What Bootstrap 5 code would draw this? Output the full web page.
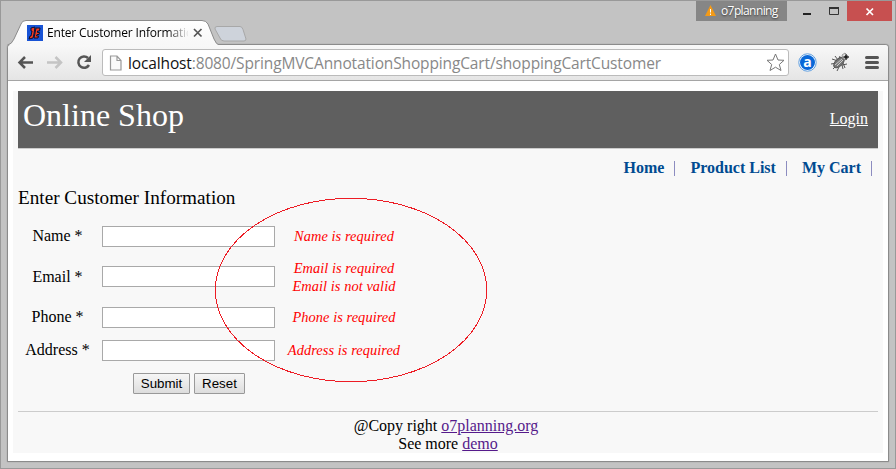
<!DOCTYPE html>
<html lang="en">
<head>
<meta charset="utf-8">
<title>Enter Customer Information</title>
<link href="https://cdn.jsdelivr.net/npm/bootstrap@5.3.0/dist/css/bootstrap.min.css" rel="stylesheet">
<style>
body{width:896px;height:469px;overflow:hidden;background:#c3c3c3;border:1px solid #999;font-family:"Liberation Serif",serif;font-size:16px;line-height:18px;color:#000}
svg{display:block;flex:none}
.titlebar{height:43px;font-family:"Open Sans",sans-serif}
.tabstrip{width:250px;height:44px}
.tab-bg{position:absolute;left:0;top:0;z-index:1}
.tab-content{position:relative;z-index:2;padding:20px 0 0 26px;height:43px}
.tab-title{width:141px;margin-left:4px;font-size:12px;letter-spacing:-.17px;white-space:nowrap;-webkit-mask-image:linear-gradient(90deg,#000 85%,transparent 101%);mask-image:linear-gradient(90deg,#000 85%,transparent 101%)}
.window-controls{padding-right:3px}
.user-tag{width:91px;height:20px;background:#868686;color:#fff;font-size:12px;letter-spacing:-.6px;padding-left:8px;text-shadow:0 1px 2px #333}
.win-btn{height:20px}
.browser{margin:0 6px;height:418px;border:1px solid #8b8b8b;border-radius:4px 4px 0 0;background:#fff;box-shadow:0 0 1px #777}
.toolbar{height:36px;border-bottom:1px solid #a5a5a5;border-radius:3px 3px 0 0;background:linear-gradient(#f8f8f8,#e5e5e5)}
.address{width:687px;height:27px;border:1px solid #bbb;border-radius:3px;background:#fff;font-family:"Open Sans",sans-serif;font-size:15.5px;letter-spacing:-.135px;color:#888}
.address b{font-weight:400;color:#111}
.page{margin:10px 5px 0;padding:0 5px;width:870px;height:362px;background:#f8f8f8}
.shop-header{height:58px;background:#5f5f5f;border-bottom:1px solid #ccc;color:#fff;padding:0 10px 0 5px}
.shop-name{font-size:32px;line-height:48px}
.shop-header a{color:#fff;margin-top:19px}
.menu{height:38px;padding-right:6px}
.menu a{color:#004b91;font-weight:700;text-decoration:none}
.menu i{width:1px;height:15px;background:#8c8cc0;margin:1px 0 0 10px}
.menu i+a{margin-left:15px}
.page-title{font-size:19.2px;line-height:22px}
.customer-form{padding-top:11px}
.form-line{height:33px}
.form-line.tall{height:48px}
.form-line.tall .field{margin-bottom:1px}
.label-cell{width:79px;text-align:center}
.field{width:173px;height:21px;border:1px solid #a9a9a9;background:#fff;margin-left:5px;padding:0 2px}
.error{width:138px;text-align:center;color:#f00;font-style:italic;font-size:14.4px;letter-spacing:.06px}
.lift{position:relative;top:-1px}
.push{height:21px;padding:0;border:1px solid #999;border-radius:1px;background:linear-gradient(#f6f6f6,#ddd);font:13.33px/18px "Liberation Sans",sans-serif;color:#000}
.buttons{padding-left:115px}
.submit{width:57px}
.reset{width:51px}
.foot{height:42px;margin-top:11px;border-top:1px solid #ccc;padding-top:5px;text-align:center;padding-right:4px}
.foot div+div{padding-left:4px}
.foot a{color:#551a8b}
.callout{position:absolute;left:214px;top:197px}
</style>
<script src="https://cdn.jsdelivr.net/npm/bootstrap@5.3.0/dist/js/bootstrap.bundle.min.js"></script>
</head>
<body>
<header class="titlebar d-flex justify-content-between align-items-start">
  <div class="tabstrip position-relative">
    <svg class="tab-bg" width="250" height="44"><defs><linearGradient id="tg" x2="0" y2="1"><stop stop-color="#fff"/><stop offset="1" stop-color="#f7f7f7"/></linearGradient></defs>
      <path d="M216 25.500H239q2 0 3 3L245 38q0 2-2 2H223q-3 0-4-3L214 28q-.5-2.500 2-2.500Z" fill="#ced3db" stroke="#a8a8a8"/>
      <path d="M6 44.500Q11 43 13 38L20 23Q21 19.500 25 19.500H201Q205 19.500 207 23L213 38Q215 43.500 219 44.500" fill="url(#tg)" stroke="#8b8b8b"/></svg>
    <div class="tab-content d-flex align-items-center">
      <svg width="16" height="16"><rect width="16" height="16" fill="#1853d5"/><path d="M4 3L8 2L7 9L6 13L2 14L3 11H4L5 6H4Z" fill="#f33a1f" stroke="#091132"/><path d="M9 3H13L12.500 6H10.500V7.500H12.500L12 9.500H10L9.500 11H11.500L11 13H7L8 8Z" fill="#f33a1f" stroke="#091132"/></svg>
      <div class="tab-title">Enter Customer Informatio</div>
      <svg class="ms-1" width="12" height="12"><path d="M2 2L9.500 9.500M9.500 2L2 9.500" stroke="#555" stroke-width="1.700"/></svg>
    </div>
  </div>
  <div class="window-controls d-flex">
    <div class="user-tag d-flex align-items-center"><svg width="13" height="12"><path d="M6.500 0L12 11H1Z" fill="#f39a17"/><path d="M6.500 4V7.500M6.500 8.500V10" stroke="#fff"/></svg><span class="ms-1">o7planning</span></div>
    <svg class="win-btn" width="60" height="20"><path d="M16 13H24" stroke="#222" stroke-width="2"/><path d="M42.500 7.500H51.500V13.500H42.500Z" fill="none" stroke="#333"/><path d="M42 7H52" stroke="#333" stroke-width="2"/></svg>
    <svg class="win-btn" width="45" height="20"><rect width="45" height="20" fill="#c75050"/><path d="M19.500 7.500L26 14M26 7.500L19.500 14" stroke="#fff" stroke-width="1.700"/></svg>
  </div>
</header>
<main class="browser">
  <div class="toolbar d-flex align-items-center">
    <svg width="94" height="35"><g fill="none" stroke-width="2.500"><path d="M25 17.500H12M17 12L11.500 17.500L17 23" stroke="#555"/><path d="M39 17.500H52M47.500 12L53 17.500L47.500 23" stroke="#c4c4c4"/><path d="M80 13A5.700 5.700 0 1 0 81 20" stroke="#555"/></g><path d="M83 10V17H76Z" fill="#555"/></svg>
    <div class="address d-flex align-items-center">
      <svg class="ms-1" width="21" height="20"><path d="M3.500 3H10L14 7.500V17H3.500ZM10 3V7.500H14" fill="#fafafa" stroke="#999" stroke-width="1.200"/></svg>
      <span class="url"><b>localhost</b>:8080/SpringMVCAnnotationShoppingCart/shoppingCartCustomer</span>
      <svg class="ms-auto" width="22" height="19"><path d="M9.500 1L12 7L18 7.300L13.300 11.500L15 17.500L9.500 14.200L4 17.500L5.700 11.500L1 7.300L7 7Z" fill="#fff" stroke="#777"/></svg>
    </div>
    <svg width="98" height="35"><circle cx="18.500" cy="17.500" r="8.700" fill="#fff" stroke="#5b9cdf"/><circle cx="18.500" cy="17.500" r="7.500" fill="#0968d8"/><text x="18.500" y="22" text-anchor="middle" fill="#fff" font-family="Open Sans" font-weight="700" font-size="14">a</text>
      <g stroke="#555" fill="none"><path d="M43 14L49 16L51 11M42 19L48 18M44 24L48 20M48 26L50 22M54 24L53 20L58 19M46 11L49 15M53 12V15M56 23L54 18"/><ellipse cx="50" cy="17.500" rx="6.500" ry="3.500" transform="rotate(-43 50 17.500)" fill="#777"/><path d="M46 20L53 14M48 21L54 15" stroke="#ccc"/><path d="M53 10L56 8L60 12L57 15L54 13Z" fill="#ddd" stroke="#999"/><path d="M57 9.500V14.500M54.500 12H59.500" stroke="#111" stroke-width="1.500"/></g>
      <path d="M77.500 12.500H88.500M77.500 17.500H88.500M77.500 22.500H88.500" stroke="#555" stroke-width="3" stroke-linecap="round"/></svg>
  </div>
  <section class="page">
    <div class="shop-header d-flex justify-content-between align-items-start"><div class="shop-name">Online Shop</div><a href="#">Login</a></div>
    <nav class="menu d-flex justify-content-end align-items-center"><a href="#">Home</a><i></i><a href="#">Product List</a><i></i><a href="#">My Cart</a><i></i></nav>
    <div class="page-title">Enter Customer Information</div>
    <form class="customer-form">
      <div class="form-line d-flex align-items-center"><label class="label-cell lift">Name *</label><input class="field"><div class="error lift">Name is required</div></div>
      <div class="form-line tall d-flex align-items-center"><label class="label-cell">Email *</label><input class="field"><div class="error">Email is required<br>Email is not valid</div></div>
      <div class="form-line d-flex align-items-center"><label class="label-cell lift">Phone *</label><input class="field"><div class="error lift">Phone is required</div></div>
      <div class="form-line d-flex align-items-center"><label class="label-cell lift">Address *</label><input class="field"><div class="error lift">Address is required</div></div>
      <div class="form-line d-flex align-items-center gap-1 buttons"><button type="button" class="push submit">Submit</button><button type="button" class="push reset">Reset</button></div>
    </form>
    <footer class="foot"><div>@Copy right <a href="#">o7planning.org</a></div><div>See more <a href="#">demo</a></div></footer>
  </section>
</main>
<svg class="callout" width="276" height="188"><ellipse cx="137" cy="93" rx="135.700" ry="91.700" fill="none" stroke="#ed1c24" shape-rendering="crispEdges"/></svg>
</body>
</html>
